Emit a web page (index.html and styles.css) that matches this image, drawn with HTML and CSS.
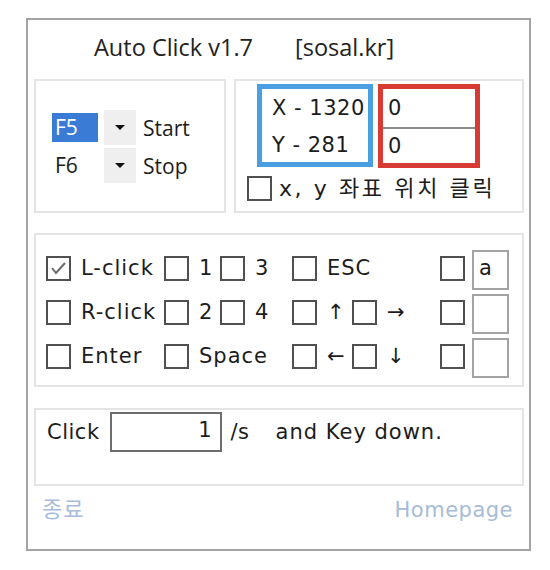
FILE: index.html
```html
<!DOCTYPE html>
<html lang="ko">
<head>
    <meta charset="UTF-8">
    <title>Auto Click v1.7</title>
    <link rel="stylesheet" href="styles.css">
</head>
<body>
    <div class="window">
        <header class="title">
            <span>Auto Click v1.7</span>
            <span class="site">[sosal.kr]</span>
        </header>

        <div class="top-row">
            <section class="panel hotkeys">
                <div class="hk-row">
                    <span class="key selected">F5</span>
                    <span class="drop"></span>
                    <span class="hk-label">Start</span>
                </div>
                <div class="hk-row">
                    <span class="key">F6</span>
                    <span class="drop"></span>
                    <span class="hk-label">Stop</span>
                </div>
            </section>

            <section class="panel coords">
                <div class="coord-boxes">
                    <div class="cur-pos">
                        <div class="pos-line">X - 1320</div>
                        <div class="pos-line">Y - 281</div>
                    </div>
                    <div class="set-pos">
                        <input class="pos-input" type="text" value="0">
                        <input class="pos-input" type="text" value="0">
                    </div>
                </div>
                <label class="check-line"><span class="cb"></span><span class="ko">x, y 좌표 위치 클릭</span></label>
            </section>
        </div>

        <section class="panel keys">
            <label class="cell"><span class="cb checked"><svg viewBox="0 0 21 21"><polyline points="4,10 8,15 17,5"/></svg></span>L-click</label>
            <label class="cell"><span class="cb"></span>1</label>
            <label class="cell"><span class="cb"></span>3</label>
            <label class="cell wide"><span class="cb"></span>ESC</label>
            <label class="cell"><span class="cb"></span></label>
            <input class="key-box" type="text" value="a">

            <label class="cell"><span class="cb"></span>R-click</label>
            <label class="cell"><span class="cb"></span>2</label>
            <label class="cell"><span class="cb"></span>4</label>
            <label class="cell"><span class="cb"></span>↑</label>
            <label class="cell"><span class="cb"></span>→</label>
            <label class="cell"><span class="cb"></span></label>
            <input class="key-box" type="text" value="">

            <label class="cell"><span class="cb"></span>Enter</label>
            <label class="cell wide"><span class="cb"></span>Space</label>
            <label class="cell"><span class="cb"></span>←</label>
            <label class="cell"><span class="cb"></span>↓</label>
            <label class="cell"><span class="cb"></span></label>
            <input class="key-box" type="text" value="">
        </section>

        <section class="panel rate">
            <span>Click</span>
            <input class="rate-input" type="text" value="1">
            <span class="per">/s</span>
            <span class="and">and Key down.</span>
        </section>

        <footer class="footer">
            <span class="ko">종료</span>
            <span>Homepage</span>
        </footer>
    </div>
</body>
</html>
```

FILE: styles.css
```css
body {
    margin: 0;
    background: #ffffff;
    font-family: "DejaVu Sans", "Noto Sans CJK KR", sans-serif;
    font-size: 21px;
    letter-spacing: 0.5px;
    color: #1c1c1c;
}
.window {
    margin: 18px 0 0 26px;
    width: 505px;
    height: 533px;
    box-sizing: border-box;
    border: 2px solid #a3a3a3;
    padding: 0 5px 0 6px;
}
.title {
    height: 59px;
    display: flex;
    align-items: center;
    padding: 0 0 5px 60px;
    box-sizing: border-box;
    font-family: "Open Sans", sans-serif;
    font-size: 23.5px;
    letter-spacing: 0;
    color: #222;
}
.title .site {
    margin-left: 42px;
}
.panel {
    border: 2px solid #e4e4e4;
    box-sizing: border-box;
}
.top-row {
    display: flex;
    gap: 8px;
    height: 134px;
}

/* hotkeys */
.hotkeys {
    width: 192px;
    display: flex;
    flex-direction: column;
    justify-content: center;
    gap: 3px;
    padding-left: 16px;
}
.hk-row {
    display: flex;
    align-items: center;
    height: 35px;
    font-family: "Open Sans", sans-serif;
    font-size: 21px;
    letter-spacing: 0;
}
.key {
    width: 46px;
    height: 29px;
    line-height: 29px;
    padding-left: 3px;
    box-sizing: border-box;
}
.key.selected {
    background: #3a7bd5;
    color: #ffffff;
}
.drop {
    width: 32px;
    height: 35px;
    margin-left: 6px;
    background: #efefef;
    display: flex;
    align-items: center;
    justify-content: center;
}
.drop::after {
    content: "";
    border-left: 5px solid transparent;
    border-right: 5px solid transparent;
    border-top: 5px solid #111;
}
.hk-label {
    margin-left: 7px;
    padding-top: 1px;
}

/* coordinates */
.coords {
    flex: 1;
    padding: 3px 0 0 11px;
}
.coord-boxes {
    display: flex;
    gap: 5px;
    margin-left: 10px;
}
.cur-pos {
    width: 116px;
    height: 83px;
    box-sizing: border-box;
    border: 5px solid #4a9fe2;
    padding: 1px 0 0 10px;
}
.pos-line {
    height: 37px;
    line-height: 37px;
    white-space: nowrap;
}
.set-pos {
    width: 102px;
    height: 84px;
    box-sizing: border-box;
    border: 5px solid #d83a34;
    display: flex;
    flex-direction: column;
}
.pos-input {
    height: 38px;
    border: none;
    padding: 0 0 0 5px;
    margin: 0;
    font: inherit;
    color: inherit;
    background: #fff;
    box-sizing: border-box;
    width: 100%;
    outline: none;
}
.pos-input + .pos-input {
    border-top: 2px solid #8a8a8a;
    height: 36px;
}
.check-line {
    display: flex;
    align-items: center;
    gap: 7px;
    margin-top: 8px;
}
.check-line .ko {
    font-size: 22px;
    letter-spacing: 2.6px;
    line-height: 24px;
}

/* checkbox */
.cb {
    width: 25px;
    height: 25px;
    box-sizing: border-box;
    border: 2px solid #505050;
    background: #fff;
    flex: none;
    display: flex;
}
.cb svg {
    width: 100%;
    height: 100%;
}
.cb polyline {
    fill: none;
    stroke: #6a6a6a;
    stroke-width: 2;
}

/* key options */
.keys {
    margin-top: 20px;
    height: 154px;
    padding: 13px 0 0 10px;
    display: grid;
    grid-template-columns: 118px 56px 72px 60px 88px 32px 37px;
    grid-auto-rows: 44px;
    align-items: center;
}
.cell {
    display: flex;
    align-items: center;
    gap: 10px;
    margin-bottom: 4px;
    white-space: nowrap;
    letter-spacing: 1px;
}
.cell.wide {
    grid-column: span 2;
}
.key-box {
    width: 37px;
    height: 40px;
    box-sizing: border-box;
    border: 2px solid #a3a3a3;
    padding: 0 0 4px 5px;
    margin: 0;
    font: inherit;
    color: inherit;
    outline: none;
}

/* click rate */
.rate {
    margin-top: 21px;
    height: 78px;
    padding: 2px 0 0 11px;
    display: flex;
    align-items: flex-start;
}
.rate > span {
    line-height: 40px;
}
.rate-input {
    width: 112px;
    height: 40px;
    box-sizing: border-box;
    margin: 0 0 0 10px;
    border: 2px solid #6e6e6e;
    padding: 0 8px 4px 0;
    text-align: right;
    font: inherit;
    color: inherit;
    outline: none;
}
.rate .per {
    margin-left: 9px;
}
.rate .and {
    margin-left: 26px;
    letter-spacing: 1px;
}

/* footer */
.footer {
    display: flex;
    justify-content: space-between;
    padding: 11px 11px 0 8px;
    line-height: 26px;
    color: #a6bcd9;
}
.footer .ko {
    font-size: 22px;
    letter-spacing: 1px;
}
```
